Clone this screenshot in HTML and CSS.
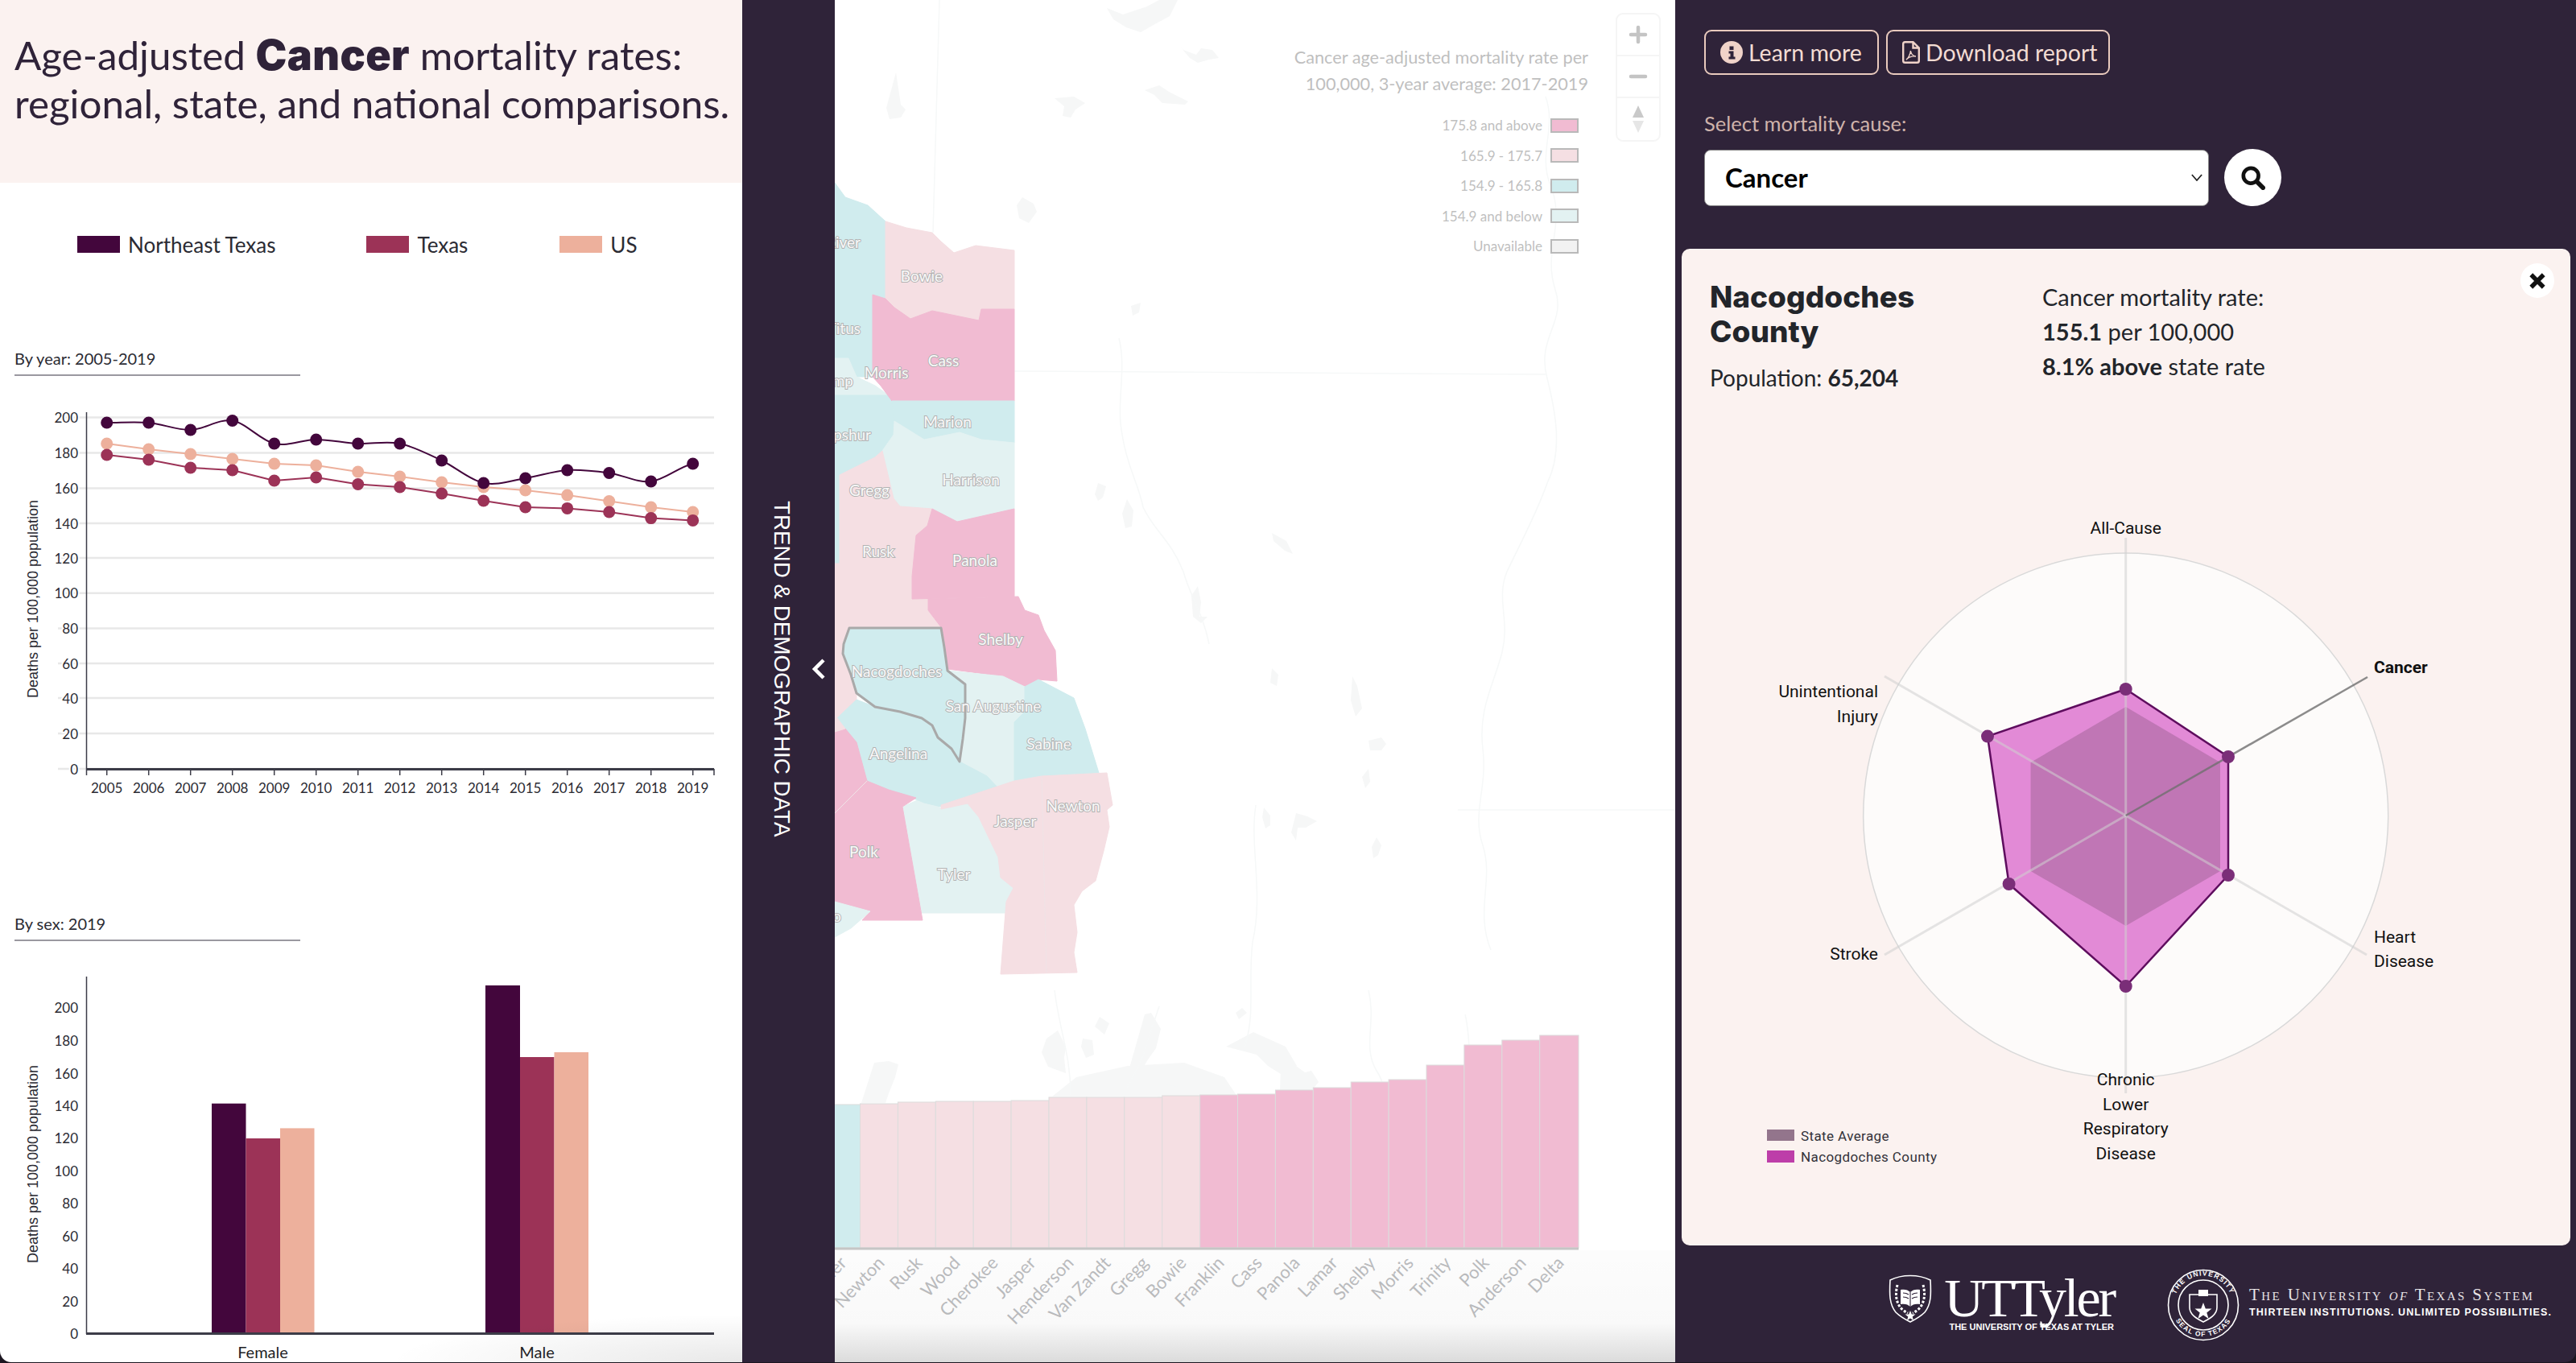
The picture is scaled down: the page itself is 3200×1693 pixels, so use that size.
FILE: index.html
```html
<!DOCTYPE html>
<html>
  <head>
    <meta charset="utf-8">
    <title>Age-adjusted Cancer mortality rates</title>
    <link rel="stylesheet" href="styles.css">
  </head>
  <body>
    <div class="app">

      <section class="trend">
        <header class="trend-head">
          <h1>Age-adjusted <b>Cancer</b> mortality rates:<br>regional, state, and national comparisons.</h1>
        </header>
        <div class="key">
          <span class="key-item key-ne"><i></i>Northeast Texas</span>
          <span class="key-item key-tx"><i></i>Texas</span>
          <span class="key-item key-us"><i></i>US</span>
        </div>

        <h2 class="chart-title chart-title-year">By year: 2005-2019</h2>
        <svg class="chart chart-line" viewBox="0 490 922 510" width="922" height="510">
          <g class="grid">
            <line x1="72" x2="887" y1="518.6" y2="518.6"/>
            <line x1="72" x2="887" y1="562.6" y2="562.6"/>
            <line x1="72" x2="887" y1="606.4" y2="606.4"/>
            <line x1="72" x2="887" y1="650" y2="650"/>
            <line x1="72" x2="887" y1="693" y2="693"/>
            <line x1="72" x2="887" y1="736.8" y2="736.8"/>
            <line x1="72" x2="887" y1="780.6" y2="780.6"/>
            <line x1="72" x2="887" y1="824" y2="824"/>
            <line x1="72" x2="887" y1="867" y2="867"/>
            <line x1="72" x2="887" y1="911" y2="911"/>
            <line x1="72" x2="887" y1="955" y2="955"/>
          </g>
          <g class="tick-y">
            <text x="97" y="518.6">200</text>
            <text x="97" y="562.6">180</text>
            <text x="97" y="606.4">160</text>
            <text x="97" y="650">140</text>
            <text x="97" y="693">120</text>
            <text x="97" y="736.8">100</text>
            <text x="97" y="780.6">80</text>
            <text x="97" y="824">60</text>
            <text x="97" y="867">40</text>
            <text x="97" y="911">20</text>
            <text x="97" y="955">0</text>
          </g>
          <text class="axis-name" transform="translate(41 744) rotate(-90)">Deaths per 100,000 population</text>
          <line class="axis" x1="107.5" x2="107.5" y1="512" y2="955"/>
          <line class="axis axis-x" x1="107" x2="887" y1="955.5" y2="955.5"/>
          <path class="axis" d="M107.5 955v8M132.7 955v8M184.7 955v8M236.7 955v8M288.7 955v8M340.7 955v8M392.7 955v8M444.7 955v8M496.7 955v8M548.7 955v8M600.7 955v8M652.7 955v8M704.7 955v8M756.7 955v8M808.7 955v8M860.7 955v8M887 955v8"/>
          <g class="tick-x">
            <text x="132.7" y="978">2005</text>
            <text x="184.7" y="978">2006</text>
            <text x="236.7" y="978">2007</text>
            <text x="288.7" y="978">2008</text>
            <text x="340.7" y="978">2009</text>
            <text x="392.7" y="978">2010</text>
            <text x="444.7" y="978">2011</text>
            <text x="496.7" y="978">2012</text>
            <text x="548.7" y="978">2013</text>
            <text x="600.7" y="978">2014</text>
            <text x="652.7" y="978">2015</text>
            <text x="704.7" y="978">2016</text>
            <text x="756.7" y="978">2017</text>
            <text x="808.7" y="978">2018</text>
            <text x="860.7" y="978">2019</text>
          </g>

          <polyline class="line line-us" points="132.7,551 184.7,558 236.7,564 288.7,570 340.7,576 392.7,578 444.7,586 496.7,592 548.7,599 600.7,605 652.7,609 704.7,615 756.7,622.5 808.7,630 860.7,636"/>
          <g class="dots-us">
            <circle cx="132.7" cy="551" r="7.5"/><circle cx="184.7" cy="558" r="7.5"/><circle cx="236.7" cy="564" r="7.5"/><circle cx="288.7" cy="570" r="7.5"/><circle cx="340.7" cy="576" r="7.5"/><circle cx="392.7" cy="578" r="7.5"/><circle cx="444.7" cy="586" r="7.5"/><circle cx="496.7" cy="592" r="7.5"/><circle cx="548.7" cy="599" r="7.5"/><circle cx="600.7" cy="605" r="7.5"/><circle cx="652.7" cy="609" r="7.5"/><circle cx="704.7" cy="615" r="7.5"/><circle cx="756.7" cy="622.5" r="7.5"/><circle cx="808.7" cy="630" r="7.5"/><circle cx="860.7" cy="636" r="7.5"/>
          </g>
          <polyline class="line line-tx" points="132.7,565 184.7,571 236.7,581 288.7,584 340.7,597 392.7,593 444.7,601.5 496.7,605 548.7,613 600.7,622 652.7,630 704.7,631.4 756.7,636 808.7,643.6 860.7,646.4"/>
          <g class="dots-tx">
            <circle cx="132.7" cy="565" r="7.5"/><circle cx="184.7" cy="571" r="7.5"/><circle cx="236.7" cy="581" r="7.5"/><circle cx="288.7" cy="584" r="7.5"/><circle cx="340.7" cy="597" r="7.5"/><circle cx="392.7" cy="593" r="7.5"/><circle cx="444.7" cy="601.5" r="7.5"/><circle cx="496.7" cy="605" r="7.5"/><circle cx="548.7" cy="613" r="7.5"/><circle cx="600.7" cy="622" r="7.5"/><circle cx="652.7" cy="630" r="7.5"/><circle cx="704.7" cy="631.4" r="7.5"/><circle cx="756.7" cy="636" r="7.5"/><circle cx="808.7" cy="643.6" r="7.5"/><circle cx="860.7" cy="646.4" r="7.5"/>
          </g>
          <path class="line line-ne" d="M132.7 525C150 525 167.4 523.5 184.7 525C202 526.5 219.4 534.4 236.7 534C254 533.6 271.4 519.7 288.7 522.5C306 525.3 323.4 547.1 340.7 551C358 554.9 375.4 546 392.7 546C410 546 427.4 550.2 444.7 551C462 551.8 479.4 547.5 496.7 551C514 554.5 531.4 563.8 548.7 572C566 580.2 583.4 596.3 600.7 600C618 603.7 635.4 596.7 652.7 594C670 591.3 687.4 585.1 704.7 584C722 582.9 739.4 585.2 756.7 587.5C774 589.8 791.4 599.9 808.7 598C826 596.1 843.4 579.7 860.7 576"/>
          <g class="dots-ne">
            <circle cx="132.7" cy="525" r="7.5"/><circle cx="184.7" cy="525" r="7.5"/><circle cx="236.7" cy="534" r="7.5"/><circle cx="288.7" cy="522.5" r="7.5"/><circle cx="340.7" cy="551" r="7.5"/><circle cx="392.7" cy="546" r="7.5"/><circle cx="444.7" cy="551" r="7.5"/><circle cx="496.7" cy="551" r="7.5"/><circle cx="548.7" cy="572" r="7.5"/><circle cx="600.7" cy="600" r="7.5"/><circle cx="652.7" cy="594" r="7.5"/><circle cx="704.7" cy="584" r="7.5"/><circle cx="756.7" cy="587.5" r="7.5"/><circle cx="808.7" cy="598" r="7.5"/><circle cx="860.7" cy="576" r="7.5"/>
          </g>
        </svg>

        <h2 class="chart-title chart-title-sex">By sex: 2019</h2>
        <svg class="chart chart-bar" viewBox="0 1200 922 493" width="922" height="493">
          <g class="tick-y">
            <text x="97" y="1251.6">200</text>
            <text x="97" y="1292.5">180</text>
            <text x="97" y="1333">160</text>
            <text x="97" y="1373">140</text>
            <text x="97" y="1413.5">120</text>
            <text x="97" y="1454.4">100</text>
            <text x="97" y="1494.6">80</text>
            <text x="97" y="1535">60</text>
            <text x="97" y="1575">40</text>
            <text x="97" y="1616">20</text>
            <text x="97" y="1656">0</text>
          </g>
          <text class="axis-name" transform="translate(41 1446) rotate(-90)">Deaths per 100,000 population</text>
          <rect class="bar-ne" x="263" y="1370.7" width="42.5" height="285.8"/>
          <rect class="bar-tx" x="305.5" y="1414" width="42.5" height="242.5"/>
          <rect class="bar-us" x="348" y="1401.4" width="42.5" height="255.1"/>
          <rect class="bar-ne" x="603" y="1224" width="43" height="432.5"/>
          <rect class="bar-tx" x="646" y="1313" width="42.5" height="343.5"/>
          <rect class="bar-us" x="688.5" y="1307" width="42.5" height="349.5"/>
          <line class="axis" x1="107.5" x2="107.5" y1="1213" y2="1657"/>
          <line class="axis axis-x" x1="107" x2="887" y1="1656.5" y2="1656.5"/>
          <text class="bar-name" x="326.5" y="1679">Female</text>
          <text class="bar-name" x="667" y="1679">Male</text>
        </svg>
        <div class="trend-shade"></div>
      </section>

      <aside class="rail">
        <span class="rail-label">TREND &amp; DEMOGRAPHIC DATA</span>
        <svg class="rail-arrow" viewBox="0 0 18 26" width="18" height="26"><polyline points="15,2 4,13 15,24"/></svg>
      </aside>

      <main class="map">
        <svg class="map-canvas" viewBox="1037 0 1044 1693" width="1044" height="1693">
          <!-- terrain, very faint under the white wash -->
          <g class="water">
            <path d="M1375 10l20 8 30-10 15-8h23l-10 20-22 12-14 8-18-6-16-10z"/>
            <path d="M1456 48l14 14 16 6 6-8 14 2 8 10-12 2-14 4-10-6-12-14z"/>
            <path d="M1113 90l6 40 6 6-6 10-14 2-4-14z"/>
            <path d="M1310 122l24-2 14 8-12 8-6 10-10-2 2-12z"/>
            <path d="M1422 112l18-6 12 8 24 12-4 4-28-2-10-10z"/>
            <path d="M1270 245l14 8 4 10-10 14-12-6-3-16z"/>
            <path d="M1405 380l12-4-2 12-8 4z"/>
            <path d="M1364 600l10 4-4 14-6 4-4-8z"/>
            <path d="M1400 620l8 14-2 20-8 2-4-18z"/>
            <path d="M1580 662l18 10 8 16-10-4-14-12z"/>
            <path d="M1480 740l8-12 4 20-2 18 10 0-8 8-10-8z"/>
            <path d="M1700 920l16-4 6 8-6 8-14 0z"/>
            <path d="M1580 830l8 8-2 14-8-4z"/>
            <path d="M1570 1003l8 10 0 12-6 4-4-14z"/>
            <path d="M1710 1040l-6 12 2 14 6-4 4-12z"/>
            <path d="M1680 840l6 12 6 28-8 10-6-20z"/>
            <path d="M1700 955l-8 10 4 14 6-8z"/>
            <path d="M1610 1010l14 4 12 6-14 8-10 0-2 16-6-10z"/>
            <path d="M1070 1370l16-50 18-2 12 4-4 16-8 20-4 12z"/>
            <path d="M1300 1290l14-10 10 20-2 14 2 19-22-8-8-18z"/>
            <path d="M1402 1330l20-70 8-2 12 20-6 24-10 14-12 20z"/>
            <path d="M1307 1362l30-24 64-14 70-4 50 18 16 24z"/>
            <path d="M1523 1300l34-18 40 18 14 24-20 10-16-10-14-14z"/>
            <path d="M1591 1326l16-4 14 10 8-2 9 14-10 12-28 8-10-10z"/>
            <path d="M1360 1275l6-12 12 8-6 14z"/>
            <path d="M1345 1290l12 2 2 18-10 4-6-14z"/>
            <path d="M1535 1258l8-6 6 6-10 8z"/>
            <path d="M1430 1360l14-14 20 4-10 18z"/>
          </g>
          <g class="rivers">
            <path d="M1167 0L1159 289"/>
            <path d="M1260 461L1920 465"/>
            <path d="M1811 1006H2081"/>
            <path d="M1920 120c14 40-10 70 6 110 20 50-10 80 6 130 14 40-24 60-10 110 10 40 20 90 0 130-14 40-36 80-50 110-14 34 4 60-6 100-10 40-30 70-24 120 6 50-14 80 0 120 14 44-10 80 10 130"/>
            <path d="M1390 420c10 40-4 80 4 120 6 40 20 60 26 90 14 30 34 40 50 80 8 30 24 50 32 90"/>
            <path d="M1560 1000c-8 50 10 110-4 170-6 50 4 90-10 130"/>
            <path d="M1440 1250c-14 40-20 70-40 100M1310 1230c6 50 20 80 20 130"/>
            <path d="M1700 1230c10 40-8 70 10 100 20 30 0 40-30 60"/>
            <path d="M1820 1260c10 40 0 90 20 110"/>
          </g>

          <!-- counties -->
          <g class="counties">
            <polygon class="c-teal" points="1037,227 1050,245 1078,255 1100,275 1100,371 1084,366 1084,468 1064,468 1054,445 1037,445"/>
            <polygon class="c-pale" points="1037,445 1054,445 1064,468 1087,479 1104,491 1037,491"/>
            <polygon class="c-teal" points="1037,491 1108,491 1111,523 1110,540 1096,560 1087,568 1043,590 1043,700 1037,700"/>
            <polygon class="c-rose" points="1100,275 1126,283 1158,289 1169,300 1185,314 1212,305 1260,311 1260,384 1219,384 1216,398 1158,386 1131,396 1111,382 1100,371"/>
            <polygon class="c-pink" points="1084,366 1100,371 1111,382 1131,396 1158,386 1216,398 1219,384 1260,384 1260,498 1108,498 1094,479 1084,468"/>
            <polygon class="c-teal" points="1108,498 1260,498 1260,550 1219,546 1192,537 1148,546 1111,523"/>
            <polygon class="c-pale" points="1111,523 1148,546 1192,537 1219,546 1260,550 1260,632 1189,648 1158,632 1118,629 1110,619 1096,560 1110,540"/>
            <polygon class="c-rose" points="1096,560 1110,619 1118,629 1158,632 1152,653 1138,665 1133,716 1133,744 1153,744 1153,758 1169,779 1055,780 1048,800 1047,812 1057,838 1064,861 1064,869 1040,892 1037,888 1037,700 1043,700 1043,590 1087,568"/>
            <polygon class="c-pink" points="1158,632 1189,648 1260,632 1260,741 1133,744 1133,716 1138,665 1152,653"/>
            <polygon class="c-pink" points="1153,744 1265,741 1273,758 1290,764 1297,783 1311,808 1313,846 1290,844 1273,853 1246,840 1177,831 1173,804 1169,779 1153,758"/>
            <polygon class="c-pale" points="1177,833 1246,840 1273,853 1273,884 1260,897 1260,970 1241,980 1226,964 1192,946 1199,892 1199,850"/>
            <polygon class="c-teal" points="1273,853 1290,844 1334,867 1348,905 1365,960 1294,964 1260,970 1260,897 1273,884"/>
            <polygon class="c-pale" points="1121,1002 1142,993 1165,1000 1169,1005 1202,998 1216,1015 1240,1065 1243,1090 1259,1103 1253,1134 1145,1134"/>
            <polygon class="c-teal" points="1064,869 1087,878 1118,884 1145,892 1158,901 1165,916 1182,930 1192,946 1226,964 1241,980 1169,1002 1148,997 1138,993 1104,983 1077,970 1071,947 1050,905 1040,892"/>
            <polygon class="c-pink" points="1037,909 1050,905 1064,922 1077,970 1037,1010"/>
            <polygon class="c-pink" points="1077,970 1104,981 1138,991 1121,1002 1146,1143 1071,1143 1081,1132 1037,1120 1037,1010"/>
            <polygon class="c-rose" points="1169,1000 1260,970 1294,964 1375,960 1382,1000 1375,1006 1378,1027 1371,1057 1361,1094 1344,1107 1334,1124 1338,1158 1334,1183 1338,1208 1243,1210 1250,1120 1259,1103 1243,1090 1240,1065 1216,1015 1202,998 1169,1005"/>
            <polygon class="c-pale" points="1037,1120 1081,1132 1057,1153 1037,1164"/>
            <polygon class="c-rose" points="1037,888 1040,892 1050,905 1037,909"/>
            <polygon class="c-picked" points="1055,780 1169,780 1173,804 1177,833 1199,850 1199,892 1196,918 1192,946 1182,930 1165,916 1158,901 1145,892 1118,884 1087,878 1064,861 1057,838 1047,812 1048,800"/>
          </g>
          <path class="seam" d="M1294 964L1300 1208M1037 1010L1077 970"/>

          <g class="county-names">
            <text class="name-end" x="1069" y="300">Red River</text>
            <text class="name-end" x="1069" y="407">Titus</text>
            <text class="name-end" x="1060" y="472">Camp</text>
            <text class="name-end" x="1082" y="539">Upshur</text>
            <text class="name-end" x="1045" y="1137">San Jacinto</text>
            <text x="1145" y="342">Bowie</text>
            <text x="1101" y="462">Morris</text>
            <text x="1172" y="447">Cass</text>
            <text x="1177" y="523">Marion</text>
            <text x="1206" y="595">Harrison</text>
            <text x="1080" y="608">Gregg</text>
            <text x="1091" y="684">Rusk</text>
            <text x="1211" y="695">Panola</text>
            <text x="1243" y="793">Shelby</text>
            <text x="1114" y="833">Nacogdoches</text>
            <text x="1234" y="876">San Augustine</text>
            <text x="1303" y="923">Sabine</text>
            <text x="1116" y="935">Angelina</text>
            <text x="1333" y="1000">Newton</text>
            <text x="1261" y="1019">Jasper</text>
            <text x="1073" y="1057">Polk</text>
            <text x="1185" y="1085">Tyler</text>
          </g>

          <!-- ranking bars -->
          <g class="rank">
            <rect class="c-teal" x="1021.6" y="1372" width="46.9" height="178"/>
            <rect class="c-rose" x="1068.5" y="1371" width="46.9" height="179"/>
            <rect class="c-rose" x="1115.4" y="1369" width="46.9" height="181"/>
            <rect class="c-rose" x="1162.3" y="1368" width="46.9" height="182"/>
            <rect class="c-rose" x="1209.2" y="1368" width="46.9" height="182"/>
            <rect class="c-rose" x="1256.1" y="1367" width="46.9" height="183"/>
            <rect class="c-rose" x="1303" y="1363" width="46.9" height="187"/>
            <rect class="c-rose" x="1349.9" y="1363" width="46.9" height="187"/>
            <rect class="c-rose" x="1396.8" y="1363" width="46.9" height="187"/>
            <rect class="c-rose" x="1443.7" y="1361" width="46.9" height="189"/>
            <rect class="c-pink" x="1490.6" y="1360" width="46.9" height="190"/>
            <rect class="c-pink" x="1537.5" y="1359" width="46.9" height="191"/>
            <rect class="c-pink" x="1584.4" y="1354" width="46.9" height="196"/>
            <rect class="c-pink" x="1631.3" y="1351" width="46.9" height="199"/>
            <rect class="c-pink" x="1678.2" y="1344" width="46.9" height="206"/>
            <rect class="c-pink" x="1725.1" y="1341" width="46.9" height="209"/>
            <rect class="c-pink" x="1772" y="1323" width="46.9" height="227"/>
            <rect class="c-pink" x="1818.9" y="1298" width="46.9" height="252"/>
            <rect class="c-pink" x="1865.8" y="1292" width="46.9" height="258"/>
            <rect class="c-pink" x="1912.7" y="1286" width="48.3" height="264"/>
          </g>
          <line class="rank-axis" x1="1037" x2="1961" y1="1551" y2="1551"/>
          <g class="rank-names">
            <text transform="translate(1053 1570) rotate(-46)">Tyler</text>
            <text transform="translate(1100 1570) rotate(-46)">Newton</text>
            <text transform="translate(1147 1570) rotate(-46)">Rusk</text>
            <text transform="translate(1194 1570) rotate(-46)">Wood</text>
            <text transform="translate(1241 1570) rotate(-46)">Cherokee</text>
            <text transform="translate(1288 1570) rotate(-46)">Jasper</text>
            <text transform="translate(1335 1570) rotate(-46)">Henderson</text>
            <text transform="translate(1381 1570) rotate(-46)">Van Zandt</text>
            <text transform="translate(1428 1570) rotate(-46)">Gregg</text>
            <text transform="translate(1475 1570) rotate(-46)">Bowie</text>
            <text transform="translate(1522 1570) rotate(-46)">Franklin</text>
            <text transform="translate(1569 1570) rotate(-46)">Cass</text>
            <text transform="translate(1616 1570) rotate(-46)">Panola</text>
            <text transform="translate(1663 1570) rotate(-46)">Lamar</text>
            <text transform="translate(1710 1570) rotate(-46)">Shelby</text>
            <text transform="translate(1757 1570) rotate(-46)">Morris</text>
            <text transform="translate(1804 1570) rotate(-46)">Trinity</text>
            <text transform="translate(1851 1570) rotate(-46)">Polk</text>
            <text transform="translate(1897 1570) rotate(-46)">Anderson</text>
            <text transform="translate(1944 1570) rotate(-46)">Delta</text>
          </g>
        </svg>

        <div class="map-shade"></div>

        <div class="map-legend">
          <p class="map-legend-title">Cancer age-adjusted mortality rate per<br>100,000, 3-year average: 2017-2019</p>
          <div class="map-legend-row">175.8 and above<i class="c-pink-box"></i></div>
          <div class="map-legend-row">165.9 - 175.7<i class="c-rose-box"></i></div>
          <div class="map-legend-row">154.9 - 165.8<i class="c-teal-box"></i></div>
          <div class="map-legend-row">154.9 and below<i class="c-pale-box"></i></div>
          <div class="map-legend-row">Unavailable<i class="c-none-box"></i></div>
        </div>

        <div class="zoom-ctrl">
          <button><svg viewBox="0 0 24 24" width="24" height="24"><path d="M12 3v18M3 12h18"/></svg></button>
          <button><svg viewBox="0 0 24 24" width="24" height="24"><path d="M3 12h18"/></svg></button>
          <button><svg class="compass" viewBox="0 0 24 36" width="24" height="36"><path class="compass-n" d="M12 1l7 15H5z"/><path class="compass-s" d="M12 35l7-15H5z"/></svg></button>
        </div>
      </main>

      <section class="detail">
        <div class="tools">
          <div class="tool-btns">
            <a class="btn btn-learn">
              <svg viewBox="0 0 28 28" width="28" height="28"><circle class="ic-fill" cx="14" cy="14" r="14"/><path class="ic-cut" d="M11.5 6.5h5v4.5h-5zM10.5 12.5h6v7h2v3h-8v-3h2v-4h-2z"/></svg>
              Learn more
            </a>
            <a class="btn btn-report">
              <svg viewBox="0 0 22 28" width="22" height="28"><path class="ic-line" d="M1.2 3.5a2.3 2.3 0 0 1 2.3-2.3h10l7.3 7.3v16a2.3 2.3 0 0 1-2.3 2.3h-15a2.3 2.3 0 0 1-2.3-2.3zM13.5 1.2v7.3h7.3"/><path class="ic-thin" d="M5 23c2-1 5-6 5.5-11 .5 4 2.5 6.500 6.500 7-4-.5-9 1-12 4z"/></svg>
              Download report
            </a>
          </div>
          <label class="tool-label" for="cause">Select mortality cause:</label>
          <div class="tool-row">
            <div class="select-wrap">
              <select id="cause"><option>Cancer</option></select>
              <svg class="select-arrow" viewBox="0 0 16 10" width="14" height="9"><polyline points="1,1 8,9 15,1"/></svg>
            </div>
            <button class="search">
              <svg viewBox="0 0 32 32" width="30" height="30"><circle cx="13" cy="13" r="10"/><path d="M21 21l8 8"/></svg>
            </button>
          </div>
        </div>

        <article class="card">
          <button class="close"><svg viewBox="0 0 20 20" width="22" height="22"><path d="M3 3l14 14M17 3L3 17"/></svg></button>
          <div class="card-head">
            <div class="card-name">
              <h3>Nacogdoches<br>County</h3>
              <p>Population: <b>65,204</b></p>
            </div>
            <div class="card-rate">
              <p>Cancer mortality rate:</p>
              <p><b>155.1</b> per 100,000</p>
              <p><b>8.1% above</b> state rate</p>
            </div>
          </div>

          <svg class="radar" viewBox="2089 620 1104 927" width="1104" height="927">
            <circle class="radar-disc" cx="2640.7" cy="1013" r="326"/>
            <polygon class="radar-county" points="2640.7,856 2768,940 2768,1087 2640.7,1225 2495.6,1098 2469,914.6"/>
            <polygon class="radar-state" points="2640.7,878 2758,947 2758,1082 2640.7,1150 2522.6,1082 2522.6,947"/>
            <g class="radar-axes">
              <line x1="2640.7" y1="1013" x2="2640.7" y2="668"/>
              <line x1="2640.7" y1="1013" x2="2940" y2="1186"/>
              <line x1="2640.7" y1="1013" x2="2640.7" y2="1358"/>
              <line x1="2640.7" y1="1013" x2="2341" y2="1186"/>
              <line x1="2640.7" y1="1013" x2="2341" y2="840"/>
            </g>
            <line class="radar-axis-on" x1="2640.7" y1="1013" x2="2941" y2="841"/>
            <polygon class="radar-edge" points="2640.7,856 2768,940 2768,1087 2640.7,1225 2495.6,1098 2469,914.6"/>
            <g class="radar-dots">
              <circle cx="2640.7" cy="856" r="8"/><circle cx="2768" cy="940" r="8"/><circle cx="2768" cy="1087" r="8"/><circle cx="2640.7" cy="1225" r="8"/><circle cx="2495.6" cy="1098" r="8"/><circle cx="2469" cy="914.6" r="8"/>
            </g>
            <g class="radar-labels">
              <text class="mid" x="2640.7" y="656">All-Cause</text>
              <text class="on" x="2949" y="829">Cancer</text>
              <text x="2949" y="1164">Heart</text>
              <text x="2949" y="1194">Disease</text>
              <text class="mid" x="2640.7" y="1341">Chronic</text>
              <text class="mid" x="2640.7" y="1372">Lower</text>
              <text class="mid" x="2640.7" y="1402">Respiratory</text>
              <text class="mid" x="2640.7" y="1433">Disease</text>
              <text class="end" x="2333" y="1185">Stroke</text>
              <text class="end" x="2333" y="859">Unintentional</text>
              <text class="end" x="2333" y="890">Injury</text>
            </g>
            <rect class="sw-state" x="2195" y="1403" width="34" height="14"/>
            <text class="radar-key" x="2237" y="1411">State Average</text>
            <rect class="sw-county" x="2195" y="1429" width="34" height="15"/>
            <text class="radar-key" x="2237" y="1437">Nacogdoches County</text>
          </svg>
        </article>

        <footer class="logos">
          <div class="logo-tyler">
            <svg viewBox="0 0 54 60" width="54" height="60">
              <path class="lg-line" d="M27 1.500C36 1.500 44 3 52 7c1 18 1 30-7 40-5 5-12 9-18 12-6-3-13-7-18-12C1 37 1 25 2 7c8-4 16-5.500 25-5.500z"/>
              <path class="lg-fill" d="M15 19c5-1 9 0 12 3 3-3 7-4 12-3v18c-5-1-9 0-12 3-3-3-7-4-12-3z"/>
              <path class="lg-cut" d="M27 22v18M18 23c3 0 5 .5 7 2M36 23c-3 0-5 .5-7 2M18 28c3 0 5 .5 7 2M36 28c-3 0-5 .5-7 2"/>
              <path class="lg-leaf" d="M11 13c-2 8-3 18 3 27 2 3 6 6 10 8M43 13c2 8 3 18-3 27-2 3-6 6-10 8"/>
              <path class="lg-fill" d="M27 45l1.800 4.500h4.700l-3.800 3 1.400 4.700-4.100-2.800-4.100 2.800 1.400-4.700-3.800-3h4.700z"/>
            </svg>
            <div class="logo-tyler-text">
              <span class="logo-tyler-name">UTTyler</span>
              <span class="logo-tyler-sub">THE UNIVERSITY OF TEXAS AT TYLER</span>
            </div>
          </div>
          <div class="logo-system">
            <svg viewBox="0 0 90 90" width="90" height="90">
              <defs>
                <path id="sealTop" d="M8.500 45a36.500 36.500 0 0 1 73 0"/>
                <path id="sealLow" d="M6 45a39 39 0 0 0 78 0"/>
              </defs>
              <circle class="lg-line" cx="45" cy="45" r="43.500"/>
              <circle class="lg-line" cx="45" cy="45" r="31"/>
              <text class="seal-text"><textPath href="#sealTop" startOffset="50%">THE UNIVERSITY</textPath></text>
              <text class="seal-text"><textPath href="#sealLow" startOffset="50%">SEAL OF TEXAS</textPath></text>
              <path class="lg-line" d="M28 32h34v16c0 9-9 14-17 18-8-4-17-9-17-18z"/>
              <path class="lg-fill" d="M39 26h12v8H39z"/>
              <path class="lg-fill" d="M45 42l2.800 7.600h7.700l-6.200 4.800 2.300 7.600-6.600-4.600-6.600 4.600 2.300-7.600-6.200-4.800h7.700z"/>
            </svg>
            <div class="logo-system-text">
              <span class="logo-system-name">The University <em>of</em> Texas System</span>
              <span class="logo-system-sub">THIRTEEN INSTITUTIONS. UNLIMITED POSSIBILITIES.</span>
            </div>
          </div>
        </footer>
      </section>

    </div>
  </body>
</html>
```

FILE: styles.css
```css
html, body {
  margin: 0;
  padding: 0;
  height: 100%;
  background: #1c1620;
  overflow: hidden;
}

.app {
  display: flex;
  width: 3200px;
  height: 1692px;
  overflow: hidden;
  border-radius: 0 0 14px 14px;
  font-family: Lato, "Open Sans", sans-serif;
  color: #2f2339;
}

/* left column */
.trend {
  position: relative;
  flex: 0 0 922px;
  background: #fff;
  overflow: hidden;
}

.trend-head {
  height: 227px;
  box-sizing: border-box;
  padding: 38px 0 0 18px;
  background: #fbf2f0;
}

.trend-head h1 {
  margin: 0;
  font-size: 49.3px;
  line-height: 60px;
  font-weight: 400;
  white-space: nowrap;
  color: #2f2339;
}

.trend-head b {
  font-family: Inter, Lato, sans-serif;
  font-size: 52px;
  line-height: 50px;
  font-weight: 900;
  letter-spacing: 0.4px;
}

.key {
  position: relative;
  display: flex;
  height: 34px;
  margin-top: 60px;
  align-items: center;
  font-size: 26px;
  color: #2b2b33;
}

.key-item {
  display: flex;
  align-items: center;
}

.key-item i {
  display: block;
  width: 53px;
  height: 21px;
  margin-right: 10px;
  margin-top: -2px;
}

.key-ne { margin-left: 96px; }
.key-tx { margin-left: 113px; }
.key-us { margin-left: 114px; }
.key-ne i { background: #43063c; }
.key-tx i { background: #9c3357; }
.key-us i { background: #edb09c; }

.chart-title {
  width: 355px;
  margin: 0 0 0 18px;
  padding-bottom: 8px;
  border-bottom: 2px solid #9a98a0;
  font-size: 20px;
  line-height: 24px;
  font-weight: 400;
  color: #2b2b33;
}

.chart-title-year { margin-top: 112px; }
.chart-title-sex { margin-top: 135px; }

.chart {
  display: block;
}

.chart-line { margin-top: 23px; }
.chart-bar { margin-top: 31px; }

.grid line {
  stroke: #e8e8e8;
  stroke-width: 2.5;
}

.tick-y text {
  font-size: 17px;
  text-anchor: end;
  dominant-baseline: central;
  fill: #2b2b33;
  stroke: #fff;
  stroke-width: 4px;
  paint-order: stroke;
}

.tick-x text {
  font-size: 17px;
  text-anchor: middle;
  dominant-baseline: central;
  fill: #2b2b33;
}

.axis-name {
  font-family: "Liberation Sans", sans-serif;
  font-size: 18px;
  text-anchor: middle;
  dominant-baseline: central;
  fill: #2b2b33;
}

.axis {
  stroke: #3c3c48;
  stroke-width: 1.5;
  fill: none;
}

.axis-x {
  stroke-width: 3;
}

.line {
  fill: none;
  stroke-width: 2;
  stroke-linejoin: round;
}

.line-ne { stroke: #43063c; }
.line-tx { stroke: #9c3357; }
.line-us { stroke: #edb09c; }
.dots-ne { fill: #43063c; }
.dots-tx { fill: #9c3357; }
.dots-us { fill: #edb09c; }
.bar-ne { fill: #43063c; }
.bar-tx { fill: #9c3357; }
.bar-us { fill: #edb09c; }

.bar-name {
  font-size: 20px;
  text-anchor: middle;
  dominant-baseline: central;
  fill: #1f1f26;
}

.trend-shade {
  position: absolute;
  left: 480px;
  right: 0;
  bottom: 0;
  height: 60px;
  background: radial-gradient(ellipse at 100% 100%, rgba(0, 0, 0, 0.09), rgba(0, 0, 0, 0) 70%);
}

/* collapse rail */
.rail {
  display: flex;
  flex: 0 0 115px;
  box-sizing: border-box;
  padding: 0 0 30px 33px;
  align-items: center;
  gap: 21px;
  background: #2f2339;
}

.rail-label {
  writing-mode: vertical-rl;
  font-family: "Liberation Sans", sans-serif;
  font-size: 27.8px;
  line-height: 32px;
  white-space: nowrap;
  color: #fff;
}

.rail-arrow polyline {
  fill: none;
  stroke: #fff;
  stroke-width: 4.5;
}

/* map */
.map {
  position: relative;
  flex: 0 0 1044px;
  background: #fff;
  overflow: hidden;
}

.map-canvas {
  display: block;
}

.water { fill: #f6f7f7; }

.rivers {
  fill: none;
  stroke: #f6f8f8;
  stroke-width: 1.5;
}

.c-pink { fill: #f1bbd2; }
.c-rose { fill: #f5dfe3; }
.c-teal { fill: #d0ecee; }
.c-pale { fill: #e3f2f2; }

.counties polygon {
  stroke-width: 1;
}

.counties .c-pink { stroke: #f1bbd2; }
.counties .c-rose { stroke: #f5dfe3; }
.counties .c-teal { stroke: #d0ecee; }
.counties .c-pale { stroke: #e3f2f2; }

.counties .c-picked {
  fill: #d0ecee;
  stroke: #a9a9a9;
  stroke-width: 3;
  stroke-linejoin: round;
}

.seam {
  fill: none;
  stroke: #efe3e6;
  stroke-width: 1;
}

.county-names text {
  font-size: 19px;
  text-anchor: middle;
  dominant-baseline: central;
  fill: #f9f9f9;
  stroke: #b2b2b2;
  stroke-width: 2px;
  paint-order: stroke;
}

.county-names .name-end {
  text-anchor: end;
}

.rank rect {
  stroke: #dcdcdc;
  stroke-width: 1;
}

.rank-axis {
  stroke: #c6c6c6;
  stroke-width: 3;
}

.rank-names text {
  font-size: 22px;
  text-anchor: end;
  fill: #bcbdbf;
}

.map-shade {
  position: absolute;
  left: 0;
  right: 0;
  top: 1553px;
  bottom: 0;
  background: linear-gradient(180deg, rgba(0, 0, 0, 0.012) 0%, rgba(0, 0, 0, 0.025) 65%, rgba(0, 0, 0, 0.14) 100%);
}

.map-legend {
  position: absolute;
  top: 55px;
  right: 120px;
  display: flex;
  flex-direction: column;
  align-items: flex-end;
  font-size: 21.7px;
  color: #bfbfbf;
}

.map-legend-title {
  margin: 0 -12px 16px 0;
  line-height: 33px;
  text-align: right;
  white-space: nowrap;
}

.map-legend-row {
  display: flex;
  height: 37.5px;
  align-items: center;
  font-size: 17px;
}

.map-legend-row i {
  display: block;
  width: 31px;
  height: 14px;
  margin-left: 10px;
  border: 2px solid #b9b9b9;
}

.c-pink-box { background: #f1bbd2; }
.c-rose-box { background: #f5dfe3; }
.c-teal-box { background: #d0ecee; }
.c-pale-box { background: #e3f2f2; }
.c-none-box { background: #f2f2f2; }

.zoom-ctrl {
  position: absolute;
  top: 16px;
  left: 970px;
  width: 56px;
  box-sizing: border-box;
  border: 2px solid #f5f5f5;
  border-radius: 9px;
  background: #fff;
}

.zoom-ctrl button {
  display: flex;
  width: 100%;
  height: 52px;
  padding: 0;
  align-items: center;
  justify-content: center;
  border: 0;
  border-bottom: 2px solid #f5f5f5;
  background: none;
}

.zoom-ctrl button:last-child {
  border-bottom: 0;
}

.zoom-ctrl path {
  fill: none;
  stroke: #c4c4c4;
  stroke-width: 4.5;
  stroke-linecap: round;
}

.zoom-ctrl .compass-n {
  fill: #c9c9c9;
  stroke: none;
}

.zoom-ctrl .compass-s {
  fill: #e6e6e6;
  stroke: none;
}

/* right column */
.detail {
  display: flex;
  flex: 0 0 1119px;
  flex-direction: column;
  background: #2f2339;
}

.tools {
  padding: 37px 0 0 36px;
}

.tool-btns {
  display: flex;
  gap: 9px;
}

.btn {
  display: flex;
  height: 56px;
  box-sizing: border-box;
  align-items: center;
  gap: 7px;
  border: 2px solid #e9cabd;
  border-radius: 9px;
  font-size: 28.5px;
  white-space: nowrap;
  color: #f3dcd3;
}

.btn-learn {
  width: 217px;
  padding-left: 18px;
}

.btn-report {
  width: 278px;
  padding-left: 18px;
}

.ic-fill { fill: #f0d3c9; }
.ic-cut { fill: #2f2339; }

.ic-line {
  fill: none;
  stroke: #f0d3c9;
  stroke-width: 2.4;
}

.ic-thin {
  fill: none;
  stroke: #f0d3c9;
  stroke-width: 1.4;
}

.tool-label {
  display: block;
  margin-top: 45px;
  font-size: 25.5px;
  line-height: 30px;
  color: #cfb3ab;
}

.tool-row {
  display: flex;
  margin-top: 17px;
  align-items: center;
  gap: 19px;
}

.select-wrap {
  position: relative;
  width: 627px;
  height: 70px;
}

.select-wrap select {
  width: 100%;
  height: 100%;
  padding: 0 0 1px 25px;
  appearance: none;
  border: 1px solid #888;
  border-radius: 8px;
  background: #fff;
  font-family: Lato, sans-serif;
  font-size: 33px;
  font-weight: 700;
  color: #000;
}

.select-arrow {
  position: absolute;
  top: 30px;
  right: 8px;
}

.select-arrow polyline {
  fill: none;
  stroke: #222;
  stroke-width: 2;
}

.search {
  display: flex;
  width: 71px;
  height: 71px;
  padding: 0;
  align-items: center;
  justify-content: center;
  border: 0;
  border-radius: 50%;
  background: #fff;
}

.search circle,
.search path {
  fill: none;
  stroke: #111;
  stroke-width: 5;
}

.search path {
  stroke-width: 6;
  stroke-linecap: round;
}

.card {
  position: relative;
  box-sizing: border-box;
  height: 1238px;
  margin: 53px 7px 0 8px;
  border-radius: 10px;
  background: #fbf2f0;
  overflow: hidden;
}

.close {
  position: absolute;
  top: 18px;
  right: 20px;
  display: flex;
  width: 42px;
  height: 43px;
  padding: 0;
  align-items: center;
  justify-content: center;
  border: 0;
  border-radius: 50%;
  background: #fff;
}

.close path {
  fill: none;
  stroke: #111;
  stroke-width: 5;
}

.card-head {
  display: flex;
  padding: 38px 0 0 35px;
  color: #22252a;
}

.card-name {
  width: 413px;
}

.card-name h3 {
  margin: 0;
  font-family: Inter, Lato, sans-serif;
  font-size: 37px;
  line-height: 43px;
  font-weight: 800;
}

.card-name p {
  margin: 19px 0 0;
  font-size: 28px;
  line-height: 34px;
}

.card-rate p {
  margin: 0 0 9px;
  font-size: 29px;
  line-height: 34px;
}

.card-rate p:first-child {
  margin-top: 5px;
}

.radar {
  position: absolute;
  left: 0;
  top: 311px;
}

.radar-disc {
  fill: #fdfbfa;
  stroke: #d9d9d9;
  stroke-width: 1.5;
}

.radar-county { fill: #e28ad6; }
.radar-state { fill: #9e6294; fill-opacity: 0.5; }

.radar-edge {
  fill: none;
  stroke: #5e0d5e;
  stroke-width: 2.5;
}

.radar-axes line {
  stroke: #cfcfcf;
  stroke-opacity: 0.55;
  stroke-width: 3;
}

.radar-axis-on {
  stroke: #6f6f6f;
  stroke-opacity: 0.8;
  stroke-width: 2.5;
}

.radar-dots { fill: #7a2e78; }

.radar-labels text {
  font-family: Roboto, sans-serif;
  font-size: 21px;
  dominant-baseline: central;
  fill: #111;
}

.radar-labels .mid { text-anchor: middle; }
.radar-labels .end { text-anchor: end; }
.radar-labels .on { font-weight: 700; }

.sw-state { fill: #93758c; }
.sw-county { fill: #bd3ea9; }

.radar-key {
  font-family: Roboto, sans-serif;
  font-size: 17px;
  letter-spacing: 0.4px;
  dominant-baseline: central;
  fill: #33323a;
}

.logos {
  display: flex;
  flex: 1;
  padding: 29px 0 0 265px;
  align-items: flex-start;
  color: #fff;
}

.logo-tyler {
  display: flex;
  margin-top: 7px;
  gap: 16px;
}

.logo-tyler-text {
  display: flex;
  flex-direction: column;
  align-items: flex-end;
  width: 210px;
}

.logo-tyler-name {
  height: 58px;
  font-family: "Liberation Serif", serif;
  font-size: 68px;
  line-height: 58px;
  letter-spacing: -3.2px;
  white-space: nowrap;
}

.logo-tyler-sub {
  font-family: "Liberation Sans", sans-serif;
  font-size: 11px;
  line-height: 14px;
  font-weight: 700;
  white-space: nowrap;
}

.logo-system {
  display: flex;
  margin-left: 66px;
  align-items: center;
  gap: 12px;
}

.logo-system-text {
  display: flex;
  flex-direction: column;
  margin-top: -6px;
}

.logo-system-name {
  font-family: "Liberation Serif", serif;
  font-size: 21px;
  font-variant: small-caps;
  line-height: 24px;
  letter-spacing: 2.4px;
  color: #e8e4e6;
  white-space: nowrap;
}

.logo-system-sub {
  font-family: "Liberation Sans", sans-serif;
  font-size: 12.5px;
  line-height: 20px;
  font-weight: 700;
  letter-spacing: 1.1px;
  white-space: nowrap;
}

.lg-line {
  fill: none;
  stroke: #fff;
  stroke-width: 1.6;
}

.lg-fill { fill: #fff; }

.lg-cut {
  fill: none;
  stroke: #2f2339;
  stroke-width: 1.1;
}

.lg-leaf {
  fill: none;
  stroke: #fff;
  stroke-width: 3;
  stroke-dasharray: 3 2;
}

.seal-text {
  font-family: "Liberation Sans", sans-serif;
  font-size: 8.500px;
  font-weight: 700;
  letter-spacing: 1.200px;
  text-anchor: middle;
  fill: #fff;
}
```
